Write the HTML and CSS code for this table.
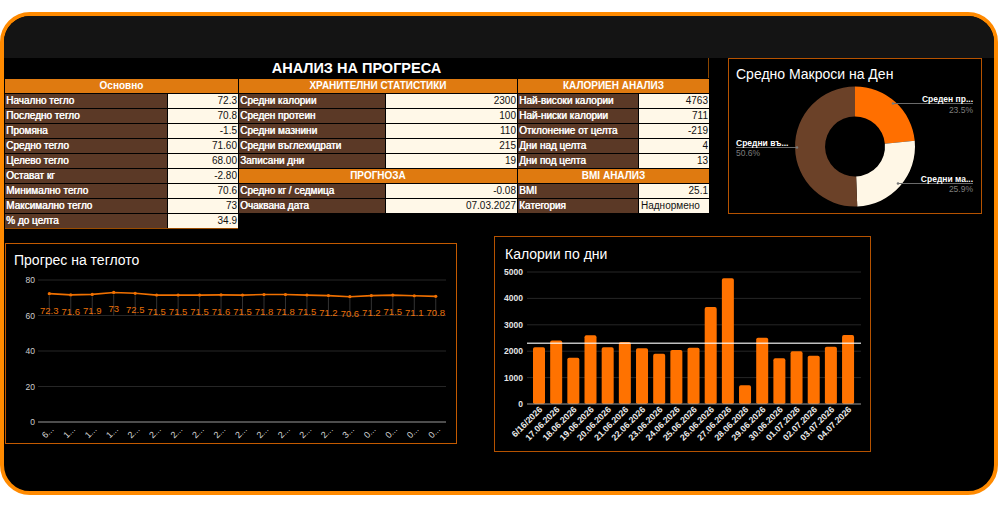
FILE: index.html
```html
<!DOCTYPE html>
<html lang="bg">
<head>
<meta charset="utf-8">
<title>Анализ на прогреса</title>
<link rel="stylesheet" href="styles.css">
</head>
<body>
<div class="frame">
  <div class="band"></div>
  <div class="top">
    <div class="sheet">
      <div class="title">АНАЛИЗ НА ПРОГРЕСА</div>
      <div class="tables">
        <div class="block block-a">
          <div class="hd">Основно</div>
          <div class="lb">Начално тегло</div><div class="vl">72.3</div>
          <div class="lb">Последно тегло</div><div class="vl">70.8</div>
          <div class="lb">Промяна</div><div class="vl">-1.5</div>
          <div class="lb">Средно тегло</div><div class="vl">71.60</div>
          <div class="lb">Целево тегло</div><div class="vl">68.00</div>
          <div class="lb">Остават кг</div><div class="vl">-2.80</div>
          <div class="lb">Минимално тегло</div><div class="vl">70.6</div>
          <div class="lb">Максимално тегло</div><div class="vl">73</div>
          <div class="lb">% до целта</div><div class="vl">34.9</div>
        </div>
        <div class="block block-b">
          <div class="hd">ХРАНИТЕЛНИ СТАТИСТИКИ</div>
          <div class="lb">Средни калории</div><div class="vl">2300</div>
          <div class="lb">Среден протеин</div><div class="vl">100</div>
          <div class="lb">Средни мазнини</div><div class="vl">110</div>
          <div class="lb">Средни въглехидрати</div><div class="vl">215</div>
          <div class="lb">Записани дни</div><div class="vl">19</div>
          <div class="hd">ПРОГНОЗА</div>
          <div class="lb">Средно кг / седмица</div><div class="vl">-0.08</div>
          <div class="lb">Очаквана дата</div><div class="vl">07.03.2027</div>
        </div>
        <div class="block block-c">
          <div class="hd">КАЛОРИЕН АНАЛИЗ</div>
          <div class="lb">Най-високи калории</div><div class="vl">4763</div>
          <div class="lb">Най-ниски калории</div><div class="vl">711</div>
          <div class="lb">Отклонение от целта</div><div class="vl">-219</div>
          <div class="lb">Дни над целта</div><div class="vl">4</div>
          <div class="lb">Дни под целта</div><div class="vl">13</div>
          <div class="hd">BMI АНАЛИЗ</div>
          <div class="lb">BMI</div><div class="vl">25.1</div>
          <div class="lb">Категория</div><div class="vl vl-text">Наднормено</div>
        </div>
      </div>
    </div>

    <div class="panel donut-panel">
      <svg class="chart" width="252" height="154" viewBox="0 0 252 154">
        <text class="ctitle" x="7" y="20">Средно Макроси на Ден</text>
        <path class="seg-orange" d="M126 27.5 A60 60 0 0 1 185.73 81.85 L155.87 84.68 A30 30 0 0 0 126 57.5 Z"/>
        <path class="seg-cream" d="M185.73 81.85 A60 60 0 0 1 128.26 147.46 L127.13 117.48 A30 30 0 0 0 155.87 84.68 Z"/>
        <path class="seg-brown" d="M128.26 147.46 A60 60 0 1 1 126 27.5 L126 57.5 A30 30 0 1 0 127.13 117.48 Z"/>
        <line class="leader" x1="164" y1="44.5" x2="244" y2="44.5"/>
        <circle class="ldot" cx="164" cy="44.5" r="1.3"/>
        <text class="dl" x="244" y="43" text-anchor="end">Среден пр...</text>
        <text class="dp" x="244" y="54" text-anchor="end">23.5%</text>
        <line class="leader" x1="169" y1="124.5" x2="244" y2="124.5"/>
        <circle class="ldot" cx="169" cy="124.5" r="1.3"/>
        <text class="dl" x="244" y="122.5" text-anchor="end">Средни ма...</text>
        <text class="dp" x="244" y="133" text-anchor="end">25.9%</text>
        <line class="leader" x1="7" y1="88.5" x2="68" y2="88.5"/>
        <circle class="ldot" cx="68" cy="88.5" r="1.3"/>
        <text class="dl" x="7" y="86.5">Средни въ...</text>
        <text class="dp" x="7" y="97">50.6%</text>
      </svg>
    </div>
  </div>

  <div class="bottom">
    <div class="panel line-panel">
      <svg class="chart" id="lineChart" width="450" height="199" viewBox="0 0 450 199">
        <text class="ctitle" x="8" y="21">Прогрес на теглото</text>
      </svg>
    </div>
    <div class="panel bar-panel">
      <svg class="chart" id="barChart" width="375" height="214" viewBox="0 0 375 214">
        <text class="ctitle" x="10" y="22">Калории по дни</text>
      </svg>
    </div>
  </div>
</div>
<script src="charts.js"></script>
</body>
</html>
```

FILE: styles.css
```css
* { box-sizing: border-box; }
html, body { margin: 0; padding: 0; background: #ffffff; }
body { font-family: "Liberation Sans", Arial, sans-serif; }

.frame {
  width: 998px;
  height: 483px;
  margin-top: 12px;
  border: 4px solid #ff8a00;
  border-radius: 30px;
  background: #000;
  overflow: hidden;
}
.band { height: 42px; background: #141414; }

.top { display: flex; align-items: flex-start; padding-left: 1px; }
.sheet { width: 704px; }
.title {
  height: 20px;
  line-height: 20px;
  text-align: center;
  color: #fff;
  font-weight: bold;
  font-size: 14.5px;
  border-right: 1px solid #8a4500;
}
.tables { display: flex; gap: 1px; background: #000; padding-top: 1px; }
.block {
  display: grid;
  grid-auto-rows: 14px;
  gap: 1px;
  font-size: 10px;
  line-height: 14px;
}
.block-a { grid-template-columns: 162px 70px; width: 233px; border-bottom: 1px solid #9a4c00; }
.block-b { grid-template-columns: 146px 131px; width: 278px; }
.block-c { grid-template-columns: 120px 70px; width: 191px; }
.hd {
  grid-column: 1 / -1;
  background: #df7a10;
  color: #fff;
  font-weight: bold;
  text-align: center;
}
.lb {
  background: #5b3926;
  color: #fff;
  padding-left: 1px;
  white-space: nowrap;
  overflow: hidden;
  text-shadow: 0.5px 0 0 #fff;
}
.vl {
  background: #fff8e8;
  color: #111;
  text-align: right;
  padding-right: 1px;
}
.vl-text { text-align: left; padding-left: 2px; }

.panel { border: 1px solid #b55200; background: #000; }
.donut-panel { margin-left: 19px; width: 254px; height: 156px; }
.bottom { display: flex; align-items: flex-start; padding-left: 1px; }
.line-panel { margin-top: 14px; width: 452px; height: 201px; border-color: #c45a00; }
.bar-panel { margin-left: 37px; margin-top: 7px; width: 377px; height: 216px; }
.chart { display: block; }

.ctitle { fill: #fff; font-family: "Liberation Sans", Arial, sans-serif; font-size: 14px; }
.seg-orange { fill: #ff6f00; }
.seg-cream { fill: #fff7e6; }
.seg-brown { fill: #6b4128; }
.leader { stroke: #6a6a6a; stroke-width: 1; }
.ldot { fill: #7a7a7a; }
.dl { fill: #fff; font-size: 8.5px; font-weight: bold; font-family: "Liberation Sans", Arial, sans-serif; }
.dp { fill: #7d7d7d; font-size: 8.5px; font-family: "Liberation Sans", Arial, sans-serif; }

.grid { stroke: #262626; stroke-width: 1; }
.axis0 { stroke: #9a9a9a; stroke-width: 1.2; }
.ylab { fill: #cfcfcf; font-size: 8.5px; font-family: "Liberation Sans", Arial, sans-serif; }
.ylab-b { fill: #e6e6e6; font-size: 8.5px; font-weight: bold; font-family: "Liberation Sans", Arial, sans-serif; }
.wline { fill: none; stroke: #f07000; stroke-width: 1.6; }
.wdot { fill: #f07000; }
.wstem { stroke: #333; stroke-width: 1; }
.wlab { fill: #e8700a; font-size: 9.5px; font-family: "Liberation Sans", Arial, sans-serif; }
.xlab { fill: #d6d6d6; font-size: 9px; font-family: "Liberation Sans", Arial, sans-serif; }
.bar { fill: #ff7200; }
.avg { stroke: rgba(255,255,255,0.75); stroke-width: 1.5; }
.dlab { fill: #ececec; font-size: 8.8px; font-weight: bold; font-family: "Liberation Sans", Arial, sans-serif; }
```

FILE: charts.js
```javascript
(function () {
  var NS = "http://www.w3.org/2000/svg";
  function el(parent, name, attrs, text) {
    var e = document.createElementNS(NS, name);
    for (var k in attrs) e.setAttribute(k, attrs[k]);
    if (text !== undefined) e.textContent = text;
    parent.appendChild(e);
    return e;
  }

  // Line chart
  var lc = document.getElementById("lineChart");
  var weights = [72.3, 71.6, 71.9, 73, 72.5, 71.5, 71.5, 71.5, 71.6, 71.5, 71.8, 71.8, 71.5, 71.2, 70.6, 71.2, 71.5, 71.1, 70.8];
  var firsts = ["6","1","1","1","2","2","2","2","2","2","2","2","2","2","3","0","0","0","0"];
  function wy(v) { return 178 - v * 1.775; }
  [80, 60, 40, 20].forEach(function (v) {
    el(lc, "line", { "class": "grid", x1: 32, x2: 440, y1: wy(v), y2: wy(v) });
  });
  [80, 60, 40, 20, 0].forEach(function (v) {
    el(lc, "text", { "class": "ylab", x: 29, y: wy(v) + 3, "text-anchor": "end" }, String(v));
  });
  var pts = [];
  weights.forEach(function (v, i) {
    var x = 43.3 + i * 21.47, y = wy(v);
    pts.push(x.toFixed(2) + "," + y.toFixed(2));
    el(lc, "line", { "class": "wstem", x1: x, x2: x, y1: y + 2, y2: 72 });
  });
  el(lc, "line", { "class": "axis0", x1: 32, x2: 440, y1: 178, y2: 178 });
  el(lc, "polyline", { "class": "wline", points: pts.join(" ") });
  weights.forEach(function (v, i) {
    var x = 43.3 + i * 21.47, y = wy(v);
    el(lc, "circle", { "class": "wdot", cx: x, cy: y, r: 1.6 });
    el(lc, "text", { "class": "wlab", x: x, y: y + 20, "text-anchor": "middle" }, String(v));
    el(lc, "text", { "class": "xlab", x: x + 5, y: 186, "text-anchor": "end",
      transform: "rotate(-45 " + (x + 5) + " 186)" }, firsts[i] + "...");
  });

  // Bar chart
  var bc = document.getElementById("barChart");
  var cals = [2150, 2410, 1750, 2600, 2150, 2350, 2110, 1900, 2045, 2130, 3670, 4763, 711, 2510, 1730, 1995, 1830, 2170, 2610];
  var dates = ["6/16/2026","17.06.2026","18.06.2026","19.06.2026","20.06.2026","21.06.2026","22.06.2026","23.06.2026","24.06.2026","25.06.2026","26.06.2026","27.06.2026","28.06.2026","29.06.2026","30.06.2026","01.07.2026","02.07.2026","03.07.2026","04.07.2026"];
  function by(v) { return 167 - v * 0.0264; }
  [5000, 4000, 3000, 2000, 1000].forEach(function (v) {
    el(bc, "line", { "class": "grid", x1: 32, x2: 366, y1: by(v), y2: by(v) });
  });
  [5000, 4000, 3000, 2000, 1000, 0].forEach(function (v) {
    el(bc, "text", { "class": "ylab-b", x: 28, y: by(v) + 3, "text-anchor": "end" }, String(v));
  });
  cals.forEach(function (v, i) {
    var c = 44 + i * 17.17;
    var top = by(v);
    el(bc, "rect", { "class": "bar", x: c - 6, y: top, width: 12, height: 167 - top, rx: 1.8 });
    el(bc, "text", { "class": "dlab", x: c + 4, y: 173, "text-anchor": "end",
      transform: "rotate(-45 " + (c + 4) + " 173)" }, dates[i]);
  });
  el(bc, "line", { "class": "axis0", x1: 32, x2: 366, y1: 167, y2: 167 });
  el(bc, "line", { "class": "avg", x1: 32, x2: 366, y1: by(2300), y2: by(2300) });
})();
```
